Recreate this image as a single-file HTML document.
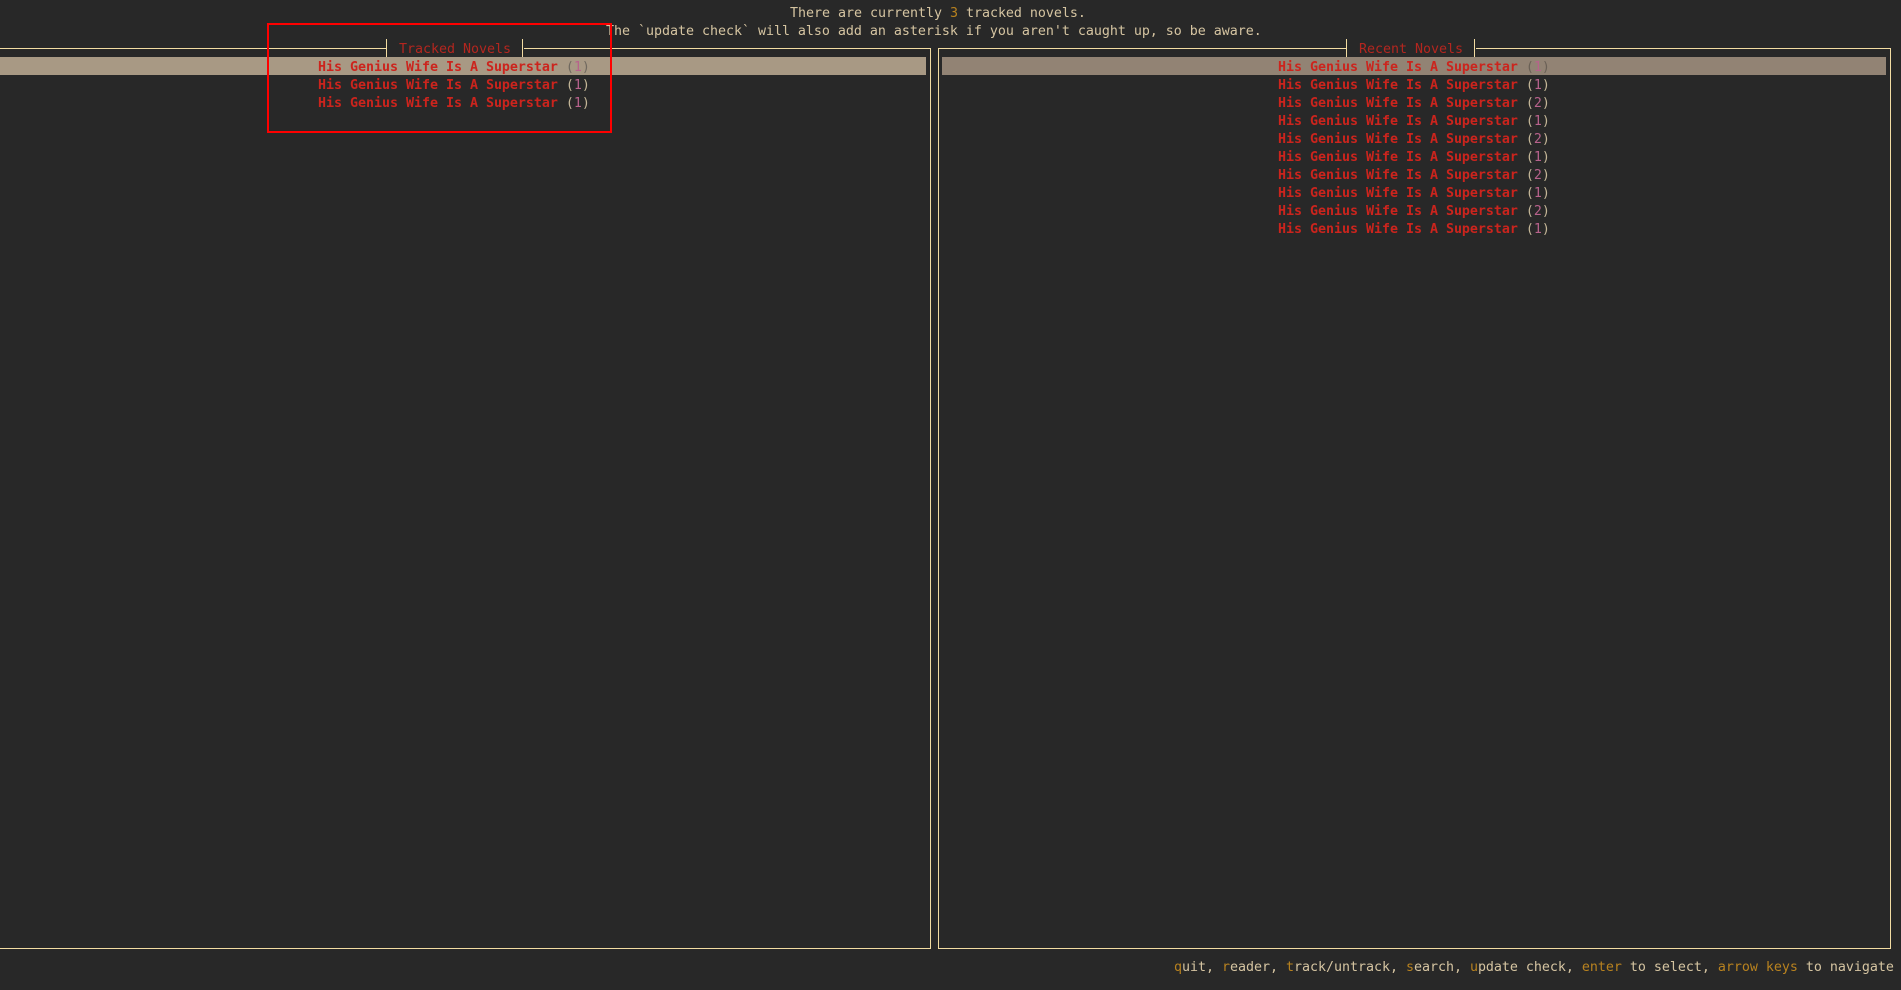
<!DOCTYPE html>
<html>
<head>
<meta charset="utf-8">
<title>Novel tracker</title>
<style>
html,body{margin:0;padding:0;background:#282828;width:1901px;height:990px;overflow:hidden}
body{position:relative;font-family:"DejaVu Sans Mono","Liberation Mono",monospace;font-size:13.333px;line-height:18px;color:#d5c4a1}
.t{position:absolute;white-space:pre;height:18px;line-height:22px;letter-spacing:-0.027px}
.m{position:absolute;height:18px;background:#282828}
.b{position:absolute;background:#f2dca2}
.hl{position:absolute;height:18px}
.r{color:#cc241d;font-weight:bold}
.o{color:#b8821f}
.p{color:#b8628c}
.g{color:#c4b697}
.title{color:#b4261f}
.h1 .g{color:#70695f}
.h2 .g{color:#6a6056}
</style>
</head>
<body>
<div class="t" style="left:790px;top:3px">There are currently <span class="o">3</span> tracked novels.</div>
<div class="t" style="left:606px;top:21px">The `update check` will also add an asterisk if you aren't caught up, so be aware.</div>

<!-- left panel -->
<div class="b" style="left:0;top:48px;width:931px;height:1px"></div>
<div class="b" style="left:930px;top:48px;width:1px;height:901px"></div>
<div class="b" style="left:0;top:948px;width:931px;height:1px"></div>
<div class="hl" style="left:0;top:57px;width:926px;background:#a89984"></div>
<div class="m" style="left:386px;top:39px;width:138px"></div>
<div class="b" style="left:386px;top:39px;width:1px;height:18px"></div>
<div class="b" style="left:522px;top:39px;width:1px;height:18px"></div>
<div class="t title" style="left:399px;top:39px">Tracked Novels</div>
<div class="t h1" style="left:318px;top:57px"><span class="r">His Genius Wife Is A Superstar</span> <span class="g">(</span><span class="p">1</span><span class="g">)</span></div>
<div class="t" style="left:318px;top:75px"><span class="r">His Genius Wife Is A Superstar</span> <span class="g">(</span><span class="p">1</span><span class="g">)</span></div>
<div class="t" style="left:318px;top:93px"><span class="r">His Genius Wife Is A Superstar</span> <span class="g">(</span><span class="p">1</span><span class="g">)</span></div>

<!-- right panel -->
<div class="b" style="left:938px;top:48px;width:953px;height:1px"></div>
<div class="b" style="left:938px;top:48px;width:1px;height:901px"></div>
<div class="b" style="left:1890px;top:48px;width:1px;height:901px"></div>
<div class="b" style="left:938px;top:948px;width:953px;height:1px"></div>
<div class="hl" style="left:942px;top:57px;width:944px;background:#928374"></div>
<div class="m" style="left:1346px;top:39px;width:130px"></div>
<div class="b" style="left:1346px;top:39px;width:1px;height:18px"></div>
<div class="b" style="left:1474px;top:39px;width:1px;height:18px"></div>
<div class="t title" style="left:1359px;top:39px">Recent Novels</div>
<div class="t h2" style="left:1278px;top:57px"><span class="r">His Genius Wife Is A Superstar</span> <span class="g">(</span><span class="p">1</span><span class="g">)</span></div>
<div class="t" style="left:1278px;top:75px"><span class="r">His Genius Wife Is A Superstar</span> <span class="g">(</span><span class="p">1</span><span class="g">)</span></div>
<div class="t" style="left:1278px;top:93px"><span class="r">His Genius Wife Is A Superstar</span> <span class="g">(</span><span class="p">2</span><span class="g">)</span></div>
<div class="t" style="left:1278px;top:111px"><span class="r">His Genius Wife Is A Superstar</span> <span class="g">(</span><span class="p">1</span><span class="g">)</span></div>
<div class="t" style="left:1278px;top:129px"><span class="r">His Genius Wife Is A Superstar</span> <span class="g">(</span><span class="p">2</span><span class="g">)</span></div>
<div class="t" style="left:1278px;top:147px"><span class="r">His Genius Wife Is A Superstar</span> <span class="g">(</span><span class="p">1</span><span class="g">)</span></div>
<div class="t" style="left:1278px;top:165px"><span class="r">His Genius Wife Is A Superstar</span> <span class="g">(</span><span class="p">2</span><span class="g">)</span></div>
<div class="t" style="left:1278px;top:183px"><span class="r">His Genius Wife Is A Superstar</span> <span class="g">(</span><span class="p">1</span><span class="g">)</span></div>
<div class="t" style="left:1278px;top:201px"><span class="r">His Genius Wife Is A Superstar</span> <span class="g">(</span><span class="p">2</span><span class="g">)</span></div>
<div class="t" style="left:1278px;top:219px"><span class="r">His Genius Wife Is A Superstar</span> <span class="g">(</span><span class="p">1</span><span class="g">)</span></div>

<!-- footer -->
<div class="t" style="left:1174px;top:957px"><span class="o">q</span>uit, <span class="o">r</span>eader, <span class="o">t</span>rack/untrack, <span class="o">s</span>earch, <span class="o">u</span>pdate check, <span class="o">enter</span> to select, <span class="o">arrow keys</span> to navigate</div>

<!-- red annotation box -->
<div style="position:absolute;left:267px;top:23px;width:341px;height:106px;border:2px solid #f00"></div>
</body>
</html>
